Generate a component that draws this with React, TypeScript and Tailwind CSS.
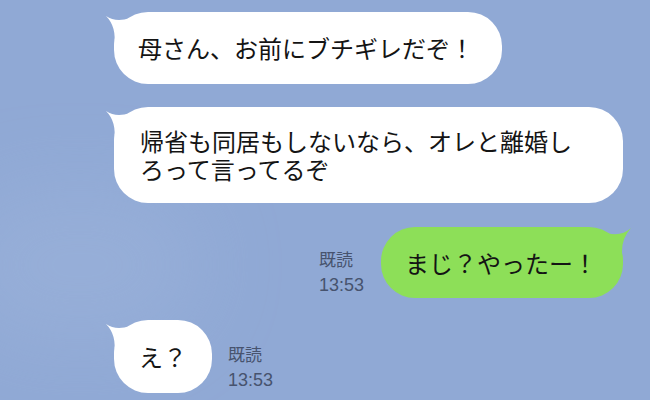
import React from "react";

const jp = { fontFamily: '"Noto Sans CJK JP", "Noto Sans", sans-serif' } as React.CSSProperties;
const lat = { fontFamily: '"Liberation Sans", "Noto Sans CJK JP", sans-serif' } as React.CSSProperties;

function LeftTail({ color = "#ffffff" }: { color?: string }) {
  return (
    <svg className="absolute left-[-10px] top-0" width="30" height="34" viewBox="0 0 30 34">
      <path d="M2 4 Q12 11 26 6 L26 34 L10 34 Q13 15 2 4Z" fill={color} />
    </svg>
  );
}

function RightTail({ color }: { color: string }) {
  return (
    <svg className="absolute right-[-10px] top-0" width="30" height="34" viewBox="0 0 30 34">
      <path d="M28 1 Q18 10 4 6 L4 34 L20 34 Q16 14 28 1Z" fill={color} />
    </svg>
  );
}

function Read() {
  return (
    <div className="flex flex-col leading-[26px] text-[#47536e]" style={lat}>
      <span style={jp} className="text-[17px]">既読</span>
      <span className="text-[18px]">13:53</span>
    </div>
  );
}

export default function App() {
  return (
    <div className="relative w-[650px] h-[400px] overflow-hidden bg-[#90a9d5]" style={jp}>
      <div className="absolute left-[-40px] top-[190px] w-[240px] h-[150px] rounded-full bg-[#9bb2da] opacity-60 blur-2xl" />
      <div className="relative flex flex-col pl-[114px]">
        <div className="mt-[12px] flex">
          <div className="relative h-[72px] w-[388px] rounded-[34px] bg-white pl-[24px] flex items-center text-[24px] text-[#141414]">
            <LeftTail />
            <span className="relative">母さん、お前にブチギレだぞ！</span>
          </div>
        </div>
        <div className="mt-[23px] flex">
          <div className="relative h-[96px] w-[509px] rounded-[34px] bg-white pl-[26px] pr-[40px] flex items-center text-[24px] leading-[28px] text-[#141414]">
            <LeftTail />
            <span className="relative">帰省も同居もしないなら、オレと離婚しろって言ってるぞ</span>
          </div>
        </div>
        <div className="mt-[24px] flex justify-end pr-[27px] items-end gap-[17px]">
          <Read />
          <div className="relative h-[71px] w-[242px] rounded-[34px] bg-[#8ddf58] pl-[24px] flex items-center text-[24px] text-[#141414]">
            <RightTail color="#8ddf58" />
            <span className="relative">まじ？やったー！</span>
          </div>
        </div>
        <div className="mt-[22px] flex items-end gap-[16px]">
          <div className="relative h-[73px] w-[98px] rounded-[34px] bg-white pl-[25px] flex items-center text-[24px] text-[#141414]">
            <LeftTail />
            <span className="relative">え？</span>
          </div>
          <Read />
        </div>
      </div>
    </div>
  );
}
